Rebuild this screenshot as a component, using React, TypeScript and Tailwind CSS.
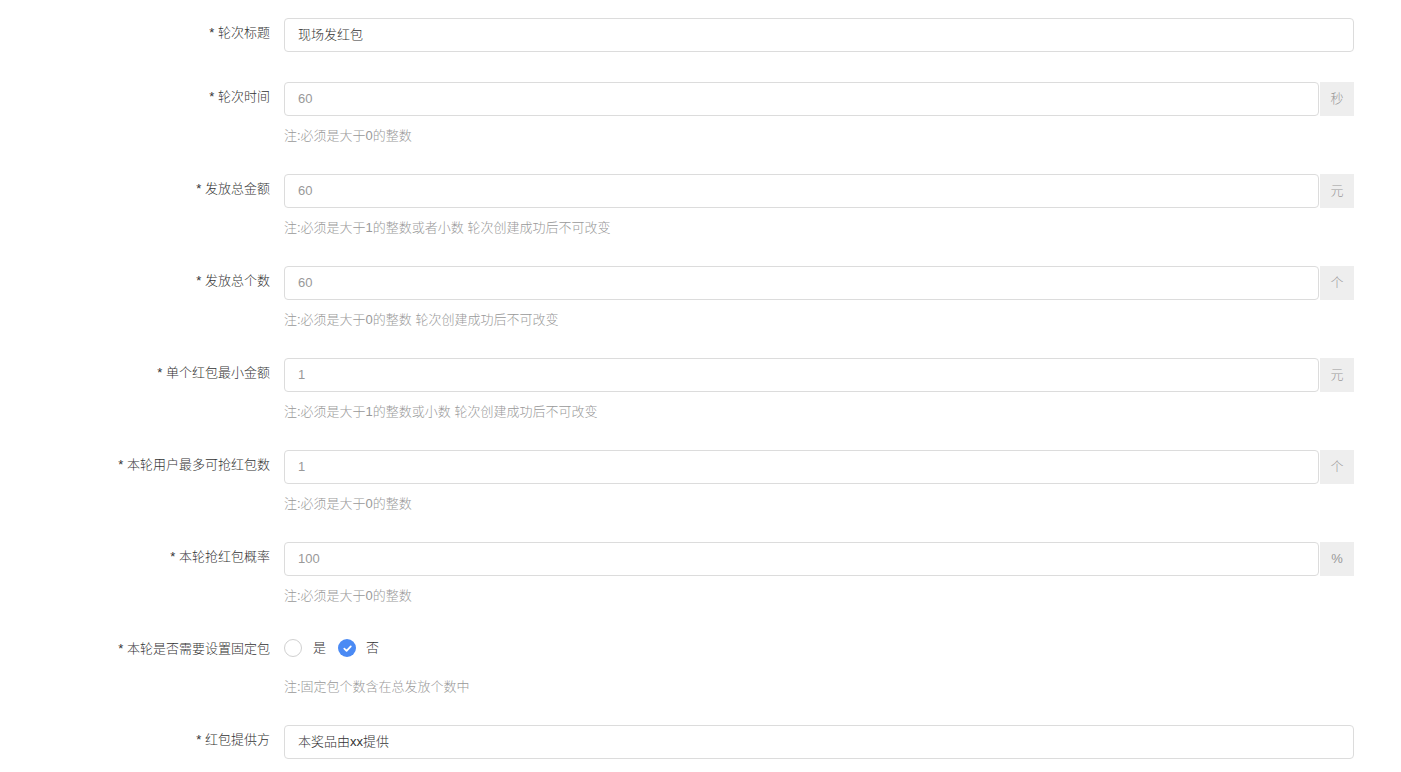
import React from "react";

type Field = {
  label: string;
  value: string;
  muted?: boolean;
  addon?: string;
  hint?: string;
};

const FIELDS: Field[] = [
  { label: "轮次标题", value: "现场发红包" },
  { label: "轮次时间", value: "60", muted: true, addon: "秒", hint: "注:必须是大于0的整数" },
  {
    label: "发放总金额",
    value: "60",
    muted: true,
    addon: "元",
    hint: "注:必须是大于1的整数或者小数 轮次创建成功后不可改变",
  },
  {
    label: "发放总个数",
    value: "60",
    muted: true,
    addon: "个",
    hint: "注:必须是大于0的整数 轮次创建成功后不可改变",
  },
  {
    label: "单个红包最小金额",
    value: "1",
    muted: true,
    addon: "元",
    hint: "注:必须是大于1的整数或小数 轮次创建成功后不可改变",
  },
  { label: "本轮用户最多可抢红包数", value: "1", muted: true, addon: "个", hint: "注:必须是大于0的整数" },
  { label: "本轮抢红包概率", value: "100", muted: true, addon: "%", hint: "注:必须是大于0的整数" },
];

const Label = ({ text }: { text: string }) => (
  <div className="w-[270px] shrink-0 text-right text-[13px] leading-[20px] pt-[5px] text-[#333]">
    * {text}
  </div>
);

const Hint = ({ text }: { text: string }) => (
  <div className="mt-[10px] text-[13px] leading-5 text-[#999]">{text}</div>
);

const Row = ({ field }: { field: Field }) => (
  <div className="flex mb-[28px]">
    <Label text={field.label} />
    <div className="ml-[14px] flex-1">
      <div className={`flex h-[34px] ${field.hint ? "" : "mb-[2px]"}`}>
        <div
          className={`flex-1 flex items-center border border-[#dcdcdc] rounded-[4px] pl-[13px] text-[13px] ${
            field.muted ? "text-[#999]" : "text-[#333]"
          }`}
        >
          {field.value}
        </div>
        {field.addon && (
          <div className="w-[34px] ml-px flex items-center justify-center bg-[#eeeeee] text-[13px] text-[#999]">
            {field.addon}
          </div>
        )}
      </div>
      {field.hint && <Hint text={field.hint} />}
    </div>
  </div>
);

export default function App() {
  return (
    <div
      className="w-[1401px] h-[772px] overflow-hidden bg-white pt-[18px] pr-[47px] font-light"
      style={{ fontFamily: '"Liberation Sans", "Noto Sans CJK SC", sans-serif' }}
    >
      {FIELDS.map((f) => (
        <Row key={f.label} field={f} />
      ))}

      <div className="flex mb-[28px]">
        <Label text="本轮是否需要设置固定包" />
        <div className="ml-[14px] flex-1">
          <div className="flex items-center h-[28px] text-[13px] text-[#333]">
            <span className="w-[18px] h-[18px] rounded-full border border-[#d0d0d0] bg-white" />
            <span className="ml-[11px]">是</span>
            <span className="ml-[12px] w-[18px] h-[18px] rounded-full bg-[#4a8af4] flex items-center justify-center">
              <svg width="11" height="11" viewBox="0 0 12 12" fill="none">
                <path d="M2.5 6.2 L5 8.6 L9.6 3.6" stroke="white" strokeWidth="1.9" strokeLinecap="round" strokeLinejoin="round" />
              </svg>
            </span>
            <span className="ml-[10px]">否</span>
          </div>
          <div className="mt-[15px] text-[13px] leading-5 text-[#999]">注:固定包个数含在总发放个数中</div>
        </div>
      </div>

      <Row field={{ label: "红包提供方", value: "本奖品由xx提供" }} />
    </div>
  );
}
